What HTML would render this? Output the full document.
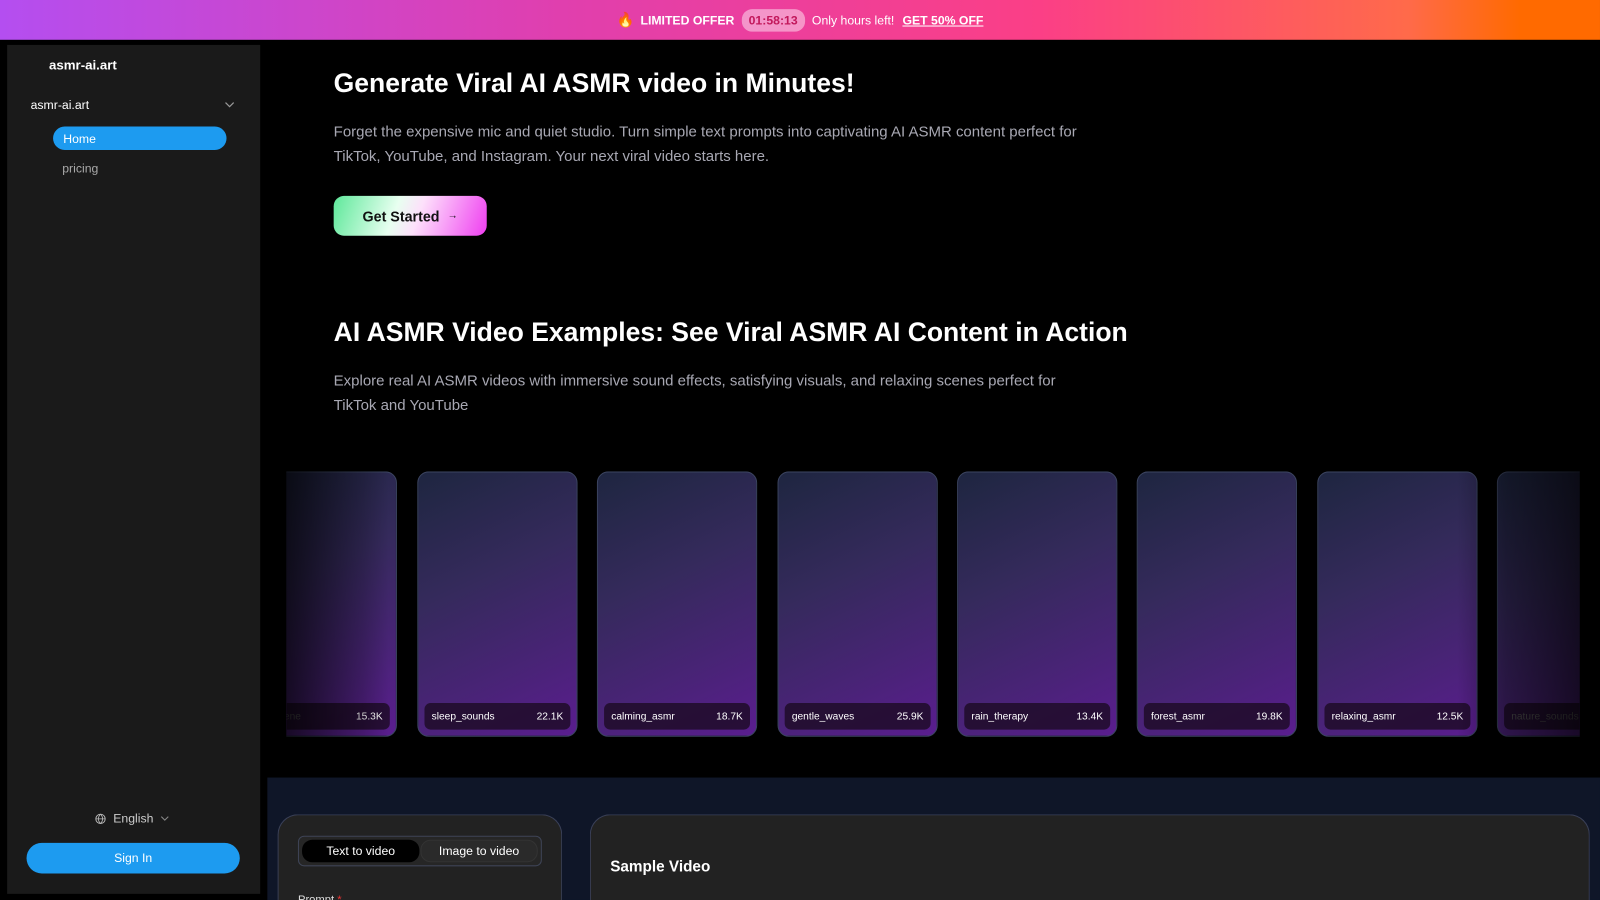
<!DOCTYPE html>
<html style="width:1600px;height:900px;overflow:hidden"><head><meta charset="utf-8"><style>
*{box-sizing:border-box;margin:0;padding:0}
body{width:1600px;height:900px;overflow:hidden;background:#000;font-family:"Liberation Sans",Arial,sans-serif;color:#fff;position:relative}
#w{position:absolute;left:0;top:0;width:1568px;height:882px;overflow:hidden;transform:scale(1.0204);transform-origin:0 0}
.banner{position:absolute;left:0;top:0;width:1568px;height:39px;background:linear-gradient(90deg,#b44ef0 0%,#e03fae 35%,#fb3f86 65%,#ff6a4a 88%,#ff6a00 95%);display:flex;align-items:center;justify-content:center;font-size:12px;font-weight:bold;gap:0}
.timer{background:rgba(255,255,255,.45);color:#c2185b;border-radius:10px;padding:4px 7px;margin:0 7px;font-size:12px}
.side{position:absolute;left:7px;top:44px;width:248px;height:832px;background:#1a1a1a}
.h1{position:absolute;left:327px;font-weight:bold;color:#fff}
p.d{position:absolute;left:327px;font-size:14.7px;line-height:24px;color:#a8a8b3}
.cards{position:absolute;left:281px;top:462px;width:1267px;height:261px;overflow:hidden}
.card{position:absolute;top:0;width:157px;height:260px;border-radius:11px;border:1px solid #3b4460;background:linear-gradient(155deg,#1e2640 0%,#352a5c 40%,#4a2378 75%,#5a1d8f 100%)}
.lab{position:absolute;left:6px;right:6px;bottom:6px;height:26px;border-radius:6px;background:rgba(30,12,40,.85);font-size:10px;display:flex;justify-content:space-between;align-items:center;padding:0 7px}
.bottom{position:absolute;left:262px;top:762px;width:1306px;height:120px;background:#0f1628;overflow:hidden}
.pan{position:absolute;background:#222;border:1px solid #3a4058;border-bottom:none;border-radius:20px 20px 0 0}
</style></head><body><div id="w">
<div class="banner"><span style="font-size:14px;margin-right:6px">🔥</span>LIMITED OFFER<span class="timer">01:58:13</span><span style="font-weight:normal">Only hours left!</span><span style="text-decoration:underline;margin-left:8px">GET 50% OFF</span></div>

<div class="side">
<div style="position:absolute;left:41px;top:12px;font-size:13px;font-weight:bold">asmr-ai.art</div>
<div style="position:absolute;left:23px;top:52px;font-size:12px">asmr-ai.art</div>
<svg style="position:absolute;left:213px;top:55px" width="10" height="7" viewBox="0 0 10 7"><path d="M1 1.5l4 4 4-4" stroke="#999" fill="none" stroke-width="1.2"/></svg>
<div style="position:absolute;left:45px;top:80px;width:170px;height:23px;border-radius:12px;background:#1d9bf0;font-size:12px;padding:5px 10px">Home</div>
<div style="position:absolute;left:54px;top:114px;font-size:12px;color:#aaa">pricing</div>
<div style="position:absolute;left:86px;top:751px;font-size:12px;color:#ccc;display:flex;align-items:center;gap:7px">
<svg width="11" height="11" viewBox="0 0 12 12"><circle cx="6" cy="6" r="5" stroke="#bbb" fill="none"/><path d="M1 6h10M6 1c-3 3-3 7 0 10M6 1c3 3 3 7 0 10" stroke="#bbb" fill="none" stroke-width=".9"/></svg>English
<svg width="9" height="6" viewBox="0 0 10 7"><path d="M1 1.5l4 4 4-4" stroke="#888" fill="none" stroke-width="1.2"/></svg></div>
<div style="position:absolute;left:19px;top:782px;width:209px;height:30px;border-radius:15px;background:#1d9bf0;font-size:12px;text-align:center;line-height:30px">Sign In</div>
</div>

<div class="h1" style="top:66px;font-size:26px">Generate Viral AI ASMR video in Minutes!</div>
<p class="d" style="top:118px;width:745px">Forget the expensive mic and quiet studio. Turn simple text prompts into captivating AI ASMR content perfect for TikTok, YouTube, and Instagram. Your next viral video starts here.</p>
<div style="position:absolute;left:327px;top:192px;width:150px;height:39px;border-radius:10px;background:linear-gradient(110deg,#5ee89a 0%,#e8fff0 40%,#fde0fb 55%,#ef3ef0 100%);color:#111;font-weight:bold;font-size:14px;display:flex;align-items:center;justify-content:center;gap:8px">Get Started <span style="font-size:10px">→</span></div>

<div class="h1" style="top:310px;font-size:26px">AI ASMR Video Examples: See Viral ASMR AI Content in Action</div>
<p class="d" style="top:362px;width:725px">Explore real AI ASMR videos with immersive sound effects, satisfying visuals, and relaxing scenes perfect for TikTok and YouTube</p>

<div class="cards">
<div class="card" style="left:-49px"><div class="lab"><span style="color:#555">rain_scene</span><span>15.3K</span></div></div>
<div class="card" style="left:128px"><div class="lab"><span>sleep_sounds</span><span>22.1K</span></div></div>
<div class="card" style="left:304px"><div class="lab"><span>calming_asmr</span><span>18.7K</span></div></div>
<div class="card" style="left:481px"><div class="lab"><span>gentle_waves</span><span>25.9K</span></div></div>
<div class="card" style="left:657px"><div class="lab"><span>rain_therapy</span><span>13.4K</span></div></div>
<div class="card" style="left:833px"><div class="lab"><span>forest_asmr</span><span>19.8K</span></div></div>
<div class="card" style="left:1010px"><div class="lab"><span>relaxing_asmr</span><span>12.5K</span></div></div>
<div class="card" style="left:1186px"><div class="lab"><span style="color:#555">nature_sounds</span><span></span></div></div>
<div style="position:absolute;left:0;top:0;width:100px;height:261px;background:linear-gradient(90deg,rgba(0,0,0,.7),rgba(0,0,0,.2) 75%,rgba(0,0,0,0))"></div>
<div style="position:absolute;right:0;top:0;width:120px;height:261px;background:linear-gradient(270deg,rgba(0,0,0,.7),rgba(0,0,0,.4) 60%,rgba(0,0,0,0))"></div>
</div>

<div class="bottom">
<div class="pan" style="left:10px;top:36px;width:279px;height:84px;overflow:hidden">
<div style="position:absolute;left:19px;top:20px;width:239px;height:30px;border:1px solid #3e4456;border-radius:6px;background:#262626">
<div style="position:absolute;left:3px;top:3px;width:115px;height:22px;border-radius:10px;background:#000;font-size:12px;text-align:center;line-height:22px">Text to video</div>
<div style="position:absolute;left:119px;top:3px;width:115px;height:22px;border-radius:10px;background:#2a2a2a;border:1px solid #333;font-size:12px;text-align:center;line-height:20px">Image to video</div>
</div>
<div style="position:absolute;left:19px;top:77px;font-size:11px;color:#ddd">Prompt <span style="color:#e33">*</span></div>
</div>
<div class="pan" style="left:316px;top:36px;width:980px;height:84px;overflow:hidden">
<div style="position:absolute;left:19px;top:42px;font-size:15px;font-weight:bold">Sample Video</div>
</div>
</div>
</div></body></html>
